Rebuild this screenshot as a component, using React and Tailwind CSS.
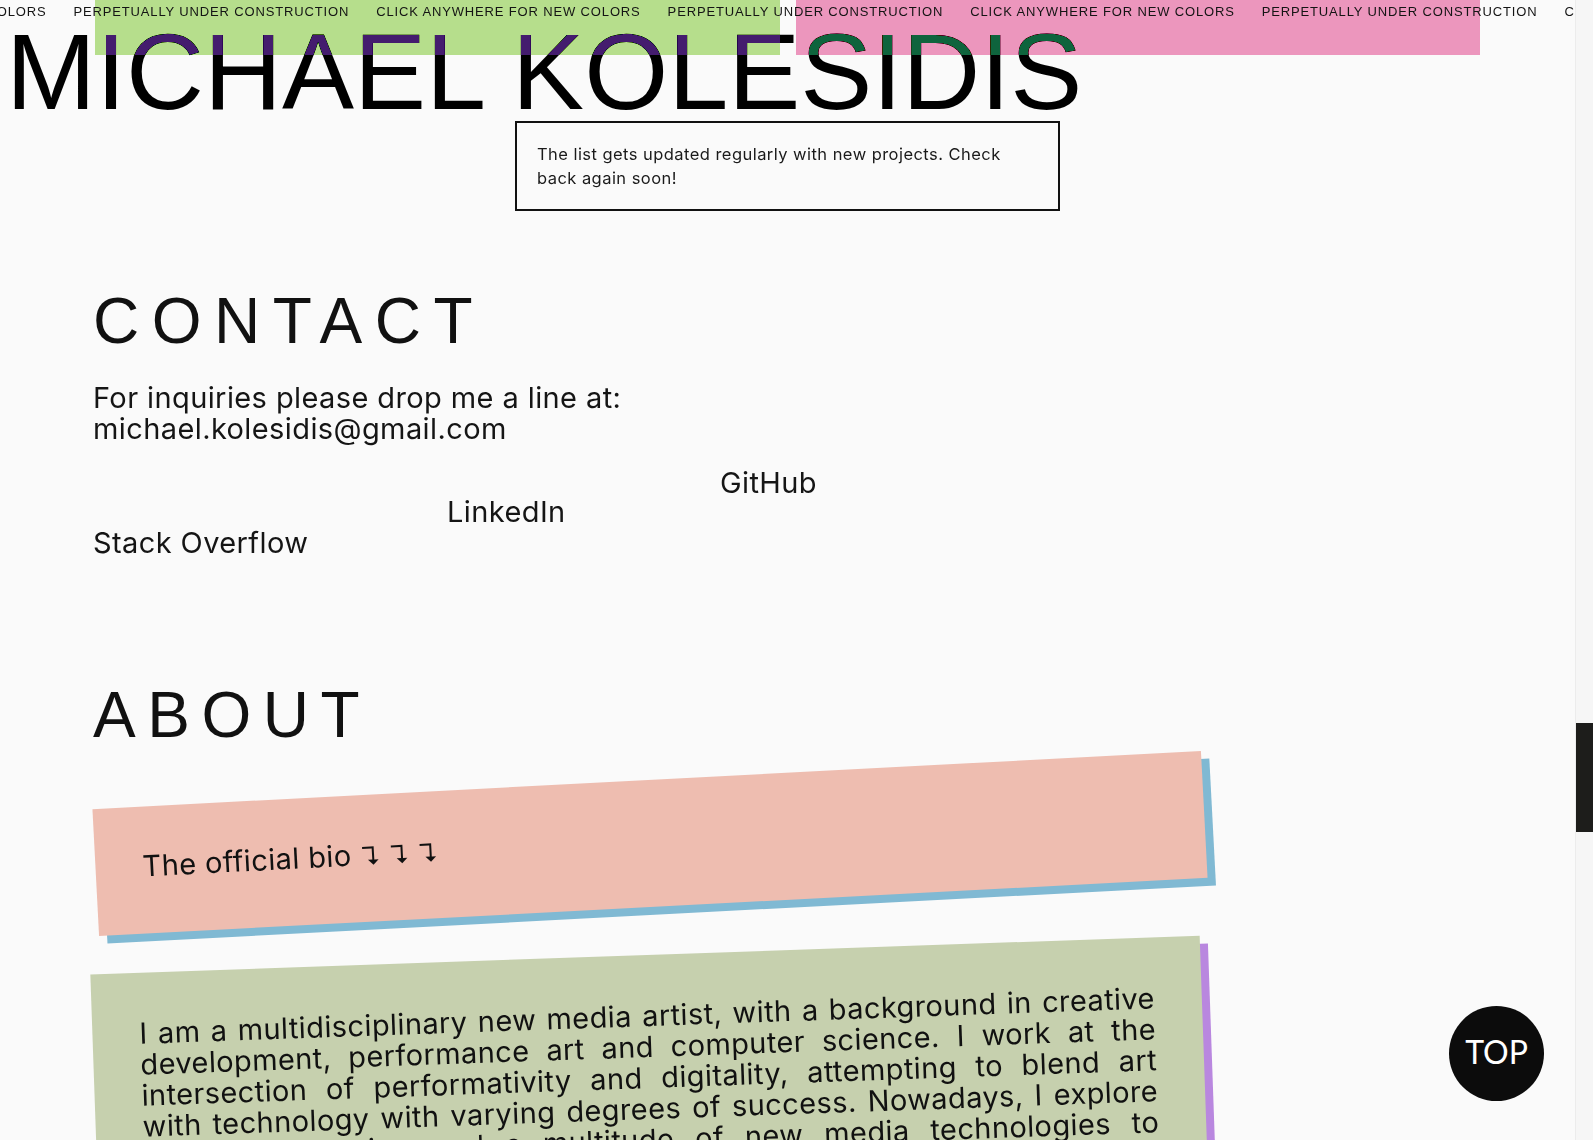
export default function App() {
  const items = [];
  for (let i = 0; i < 4; i++) {
    items.push("CLICK ANYWHERE FOR NEW COLORS", "PERPETUALLY UNDER CONSTRUCTION");
  }
  const bio = [
    "I am a multidisciplinary new media artist, with a background in creative",
    "development, performance art and computer science. I work at the",
    "intersection of performativity and digitality, attempting to blend art",
    "with technology with varying degrees of success. Nowadays, I explore",
    "web programming and a multitude of new media technologies to",
  ];
  return (
    <div className="flex h-[1140px] w-full overflow-hidden bg-[#fafafa]">
      <main className="relative min-w-0 flex-1 overflow-hidden bg-[#fafafa] text-[#111]">
        {/* marquee */}
        <div className="absolute left-[-218px] top-0 z-20 flex gap-[27px] whitespace-nowrap font-['Liberation_Sans',Arial,sans-serif] text-[13px] leading-[23px] tracking-[0.85px] text-[#141414]">
          {items.map((t, i) => (
            <span key={i}>{t}</span>
          ))}
        </div>
        {/* colour blocks */}
        <div className="absolute left-[95px] top-0 z-10 h-[55px] w-[685px] bg-[#441c6e] mix-blend-difference" />
        <div className="absolute left-[796px] top-0 z-10 h-[55px] w-[684px] bg-[#0e643d] mix-blend-difference" />

        <h1 className="whitespace-nowrap pl-[6px] pt-[24px] font-['Liberation_Sans',Arial,sans-serif] text-[108px] font-normal leading-[96px] text-black">
          MICHAEL KOLESIDIS
        </h1>

        <div className="mx-auto mt-px w-[545px] border-2 border-[#111] px-[20px] py-[19px] font-['Inter',sans-serif] text-[16.5px] leading-[24px] tracking-[0.45px] text-[#1a1a1a]">
          The list gets updated regularly with new projects. Check back again soon!
        </div>

        <section className="pl-[93px] font-['Inter','DejaVu_Sans',sans-serif]">
          <h2 className="mt-[78px] font-['Liberation_Sans',Arial,sans-serif] text-[64px] font-normal leading-none tracking-[12.5px] text-[#111]">
            CONTACT
          </h2>
          <p className="mt-[29px] text-[29px] leading-[31px] tracking-[0.4px] text-[#151515]">
            For inquiries please drop me a line at:
            <br />
            michael.kolesidis@gmail.com
          </p>
          <div className="mt-[23px] flex items-start text-[29px] leading-[31px] tracking-[0.4px] text-[#151515]">
            <span className="mt-[60px] w-[354px]">Stack Overflow</span>
            <span className="mt-[29px] w-[273px]">LinkedIn</span>
            <span>GitHub</span>
          </div>

          <h2 className="mt-[125px] font-['Liberation_Sans',Arial,sans-serif] text-[64px] font-normal leading-none tracking-[11.5px] text-[#111]">
            ABOUT
          </h2>

          <div className="ml-[2px] mt-[33px] w-[1110px] -rotate-3 bg-[#eebdb0] px-[47px] pb-[51px] pt-[45px] text-[29px] leading-[30px] tracking-[0.4px] text-[#111] shadow-[8px_8px_0_#80b9d3]">
            The official bio <span className="text-[25px]">↴ ↴ ↴</span>
          </div>

          <div className="ml-[2px] mt-[48px] h-[287px] w-[1110px] -rotate-2 bg-[#c6d0ae] px-[47px] pt-[45px] text-[29px] leading-[31px] tracking-[0.4px] text-[#111] shadow-[8px_8px_0_#b987df]">
            {bio.map((l, i) => (
              <div key={i} className="whitespace-nowrap text-justify [text-align-last:justify]">
                {l}
              </div>
            ))}
          </div>
        </section>

        <button className="absolute bottom-[39px] right-[31px] z-30 flex h-[95px] w-[95px] items-center justify-center rounded-full bg-[#0c0c0c] pb-[3px] font-['Lato',sans-serif] text-[32px] leading-none text-white">
          TOP
        </button>
      </main>
      <div className="w-[18px] shrink-0 border-l border-[#ececec] bg-[#f6f6f6]">
        <div className="mt-[723px] h-[109px] bg-[#1d1d1b]" />
      </div>
    </div>
  );
}
